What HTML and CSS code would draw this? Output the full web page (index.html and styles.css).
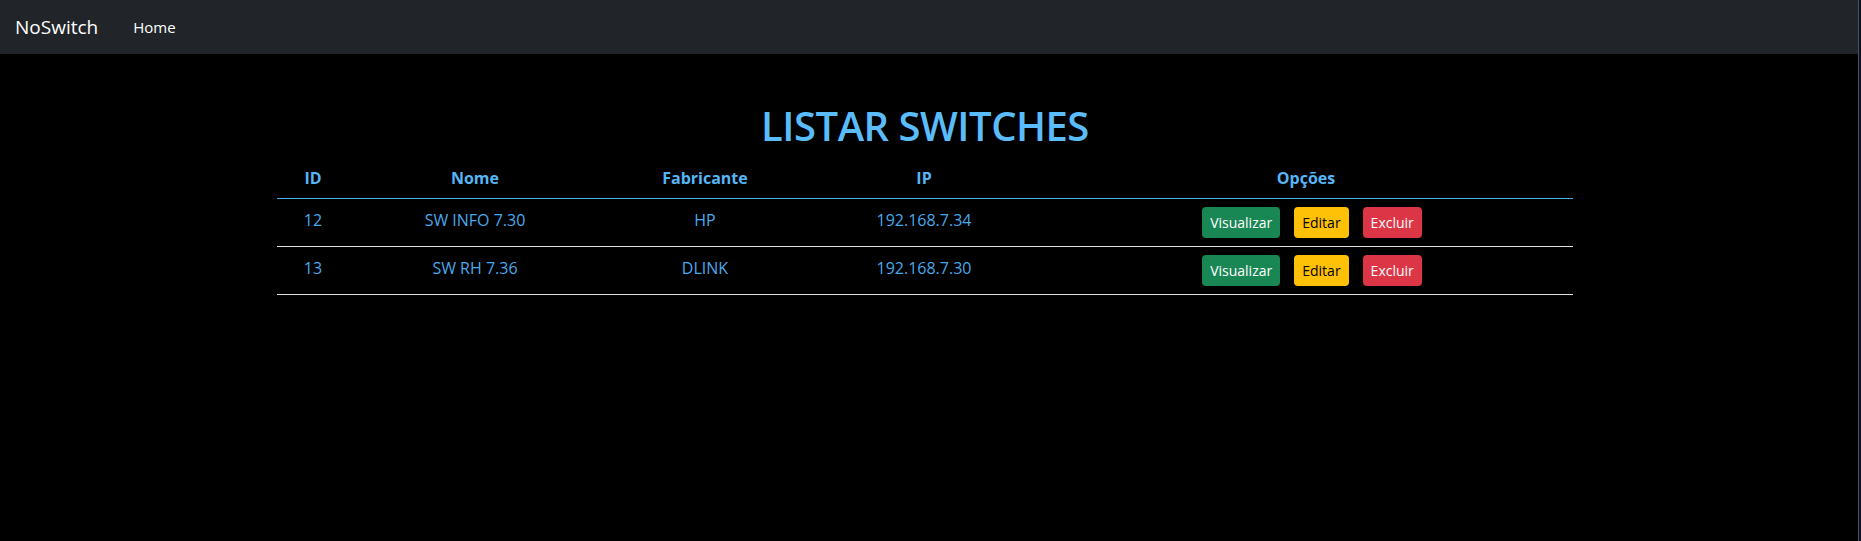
FILE: index.html
```html
<!DOCTYPE html>
<html lang="pt-BR">
<head>
<meta charset="utf-8">
<title>NoSwitch</title>
<link rel="stylesheet" href="styles.css">
</head>
<body>
  <div class="page">
    <nav class="navbar">
      <a class="brand" href="#">NoSwitch</a>
      <a class="nav-link" href="#">Home</a>
    </nav>
    <main class="content">
      <h1 class="title">LISTAR SWITCHES</h1>
      <table class="switches">
        <colgroup>
          <col class="c-id">
          <col class="c-nome">
          <col class="c-fab">
          <col class="c-ip">
          <col class="c-opt">
        </colgroup>
        <thead>
          <tr>
            <th>ID</th>
            <th>Nome</th>
            <th>Fabricante</th>
            <th>IP</th>
            <th>Opções</th>
          </tr>
        </thead>
        <tbody>
          <tr>
            <td>12</td>
            <td>SW INFO 7.30</td>
            <td>HP</td>
            <td>192.168.7.34</td>
            <td class="opt">
              <div class="actions">
                <a class="btn btn-green" href="#">Visualizar</a>
                <a class="btn btn-yellow" href="#">Editar</a>
                <a class="btn btn-red" href="#">Excluir</a>
              </div>
            </td>
          </tr>
          <tr>
            <td>13</td>
            <td>SW RH 7.36</td>
            <td>DLINK</td>
            <td>192.168.7.30</td>
            <td class="opt">
              <div class="actions">
                <a class="btn btn-green" href="#">Visualizar</a>
                <a class="btn btn-yellow" href="#">Editar</a>
                <a class="btn btn-red" href="#">Excluir</a>
              </div>
            </td>
          </tr>
        </tbody>
      </table>
    </main>
  </div>
  <div class="scroll-strip"></div>
</body>
</html>
```
FILE: styles.css
```css
* { box-sizing: border-box; }

html, body {
  margin: 0;
  height: 100%;
}

body {
  display: flex;
  background: #000;
  font-family: "Open Sans", "Noto Sans", sans-serif;
  font-size: 16px;
  line-height: 1.5;
  color: #4aa8ec;
}

.page {
  flex: 1;
  min-width: 0;
}

.scroll-strip {
  width: 3px;
  background: #0a1224;
  border-left: 1px solid #4a4f5a;
}

.navbar {
  height: 54px;
  background: #212529;
  display: flex;
  align-items: center;
  padding: 0 15px;
}

.brand {
  color: #fff;
  text-decoration: none;
  font-size: 19px;
  line-height: 30px;
  margin-right: 35px;
}

.nav-link {
  color: #fff;
  text-decoration: none;
  font-size: 15px;
}

.content {
  width: 1296px;
  margin: 48px auto 0;
  position: relative;
  left: -4px;
}

.title {
  margin: 0 0 8px;
  text-align: center;
  font-size: 40px;
  line-height: 48px;
  font-weight: 600;
  letter-spacing: -0.5px;
  color: #5bbcfb;
}

.switches {
  width: 100%;
  border-collapse: collapse;
  table-layout: fixed;
}

.c-id { width: 72px; }
.c-nome { width: 252px; }
.c-fab { width: 208px; }
.c-ip { width: 230px; }
.c-opt { width: 534px; }

.switches th,
.switches td {
  text-align: center;
  vertical-align: middle;
  padding: 8px;
}

.switches th {
  color: #57b5f5;
  font-weight: 700;
  height: 40px;
  border-bottom: 1px solid #4bb1f0;
}

.switches td {
  height: 48px;
  padding: 5px 8px 11px;
  border-bottom: 1px solid #dee2e6;
}

.switches td.opt {
  padding: 8px;
}

.actions {
  display: flex;
  justify-content: center;
  gap: 14px;
  padding-left: 12px;
}

.btn {
  display: inline-block;
  padding: 4px 7px;
  font-size: 14px;
  line-height: 21px;
  border-radius: 4px;
  border: 1px solid transparent;
  text-decoration: none;
}

.btn-green { background: #198754; color: #fff; }
.btn-yellow { background: #ffc107; color: #000; }
.btn-red { background: #dc3545; color: #fff; }
```
